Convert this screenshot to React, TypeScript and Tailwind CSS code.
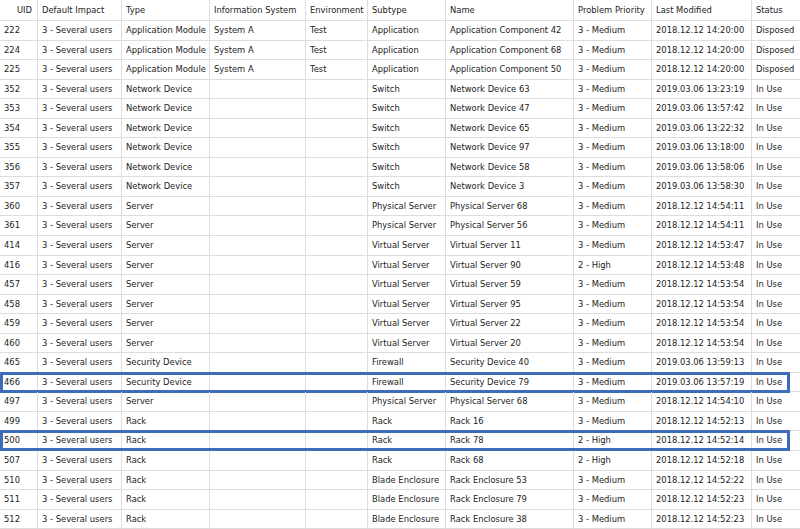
const cols = [38, 84, 88, 96, 62, 78, 128, 78, 100, 60];
const headers = ["UID","Default Impact","Type","Information System","Environment","Subtype","Name","Problem Priority","Last Modified","Status"];
const raw: string[] = [
"222|AM|System A|Test|Application|Application Component 42|3 - Medium|2018.12.12 14:20:00|Disposed",
"224|AM|System A|Test|Application|Application Component 68|3 - Medium|2018.12.12 14:20:00|Disposed",
"225|AM|System A|Test|Application|Application Component 50|3 - Medium|2018.12.12 14:20:00|Disposed",
"352|ND|||Switch|Network Device 63|3 - Medium|2019.03.06 13:23:19|In Use",
"353|ND|||Switch|Network Device 47|3 - Medium|2019.03.06 13:57:42|In Use",
"354|ND|||Switch|Network Device 65|3 - Medium|2019.03.06 13:22:32|In Use",
"355|ND|||Switch|Network Device 97|3 - Medium|2019.03.06 13:18:00|In Use",
"356|ND|||Switch|Network Device 58|3 - Medium|2019.03.06 13:58:06|In Use",
"357|ND|||Switch|Network Device 3|3 - Medium|2019.03.06 13:58:30|In Use",
"360|Server|||Physical Server|Physical Server 68|3 - Medium|2018.12.12 14:54:11|In Use",
"361|Server|||Physical Server|Physical Server 56|3 - Medium|2018.12.12 14:54:11|In Use",
"414|Server|||Virtual Server|Virtual Server 11|3 - Medium|2018.12.12 14:53:47|In Use",
"416|Server|||Virtual Server|Virtual Server 90|2 - High|2018.12.12 14:53:48|In Use",
"457|Server|||Virtual Server|Virtual Server 59|3 - Medium|2018.12.12 14:53:54|In Use",
"458|Server|||Virtual Server|Virtual Server 95|3 - Medium|2018.12.12 14:53:54|In Use",
"459|Server|||Virtual Server|Virtual Server 22|3 - Medium|2018.12.12 14:53:54|In Use",
"460|Server|||Virtual Server|Virtual Server 20|3 - Medium|2018.12.12 14:53:54|In Use",
"465|Security Device|||Firewall|Security Device 40|3 - Medium|2019.03.06 13:59:13|In Use",
"466|Security Device|||Firewall|Security Device 79|3 - Medium|2019.03.06 13:57:19|In Use",
"497|Server|||Physical Server|Physical Server 68|3 - Medium|2018.12.12 14:54:10|In Use",
"499|Rack|||Rack|Rack 16|3 - Medium|2018.12.12 14:52:13|In Use",
"500|Rack|||Rack|Rack 78|2 - High|2018.12.12 14:52:14|In Use",
"507|Rack|||Rack|Rack 68|2 - High|2018.12.12 14:52:18|In Use",
"510|Rack|||Blade Enclosure|Rack Enclosure 53|3 - Medium|2018.12.12 14:52:22|In Use",
"511|Rack|||Blade Enclosure|Rack Enclosure 79|3 - Medium|2018.12.12 14:52:23|In Use",
"512|Rack|||Blade Enclosure|Rack Enclosure 38|3 - Medium|2018.12.12 14:52:23|In Use",
];
const rows = raw.map((r) => {
  const p = r.split("|");
  const t = p[1] === "AM" ? "Application Module" : p[1] === "ND" ? "Network Device" : p[1];
  return [p[0], "3 - Several users", t, ...p.slice(2)];
});
const hl = new Set(["466", "500"]);

export default function App() {
  return (
    <div className="w-[800px] h-[529px] overflow-hidden bg-white text-[#222] text-[8.4px]" style={{ fontFamily: '"DejaVu Sans", Verdana, sans-serif' }}>
      <div className="flex h-[21px] border-b border-[#ddd]">
        {headers.map((h, i) => (
          <div key={i} className={`shrink-0 flex items-center px-[4px] border-r border-[#ddd] whitespace-nowrap overflow-hidden ${i === 0 ? "justify-end pr-[5px]" : ""}`} style={{ width: cols[i] }}>{h}</div>
        ))}
      </div>
      {rows.map((r, ri) => (
        <div key={ri} className="relative flex h-[19.56px] border-b border-[#ddd]">
          {r.map((c, i) => (
            <div key={i} className="shrink-0 flex items-center px-[4px] border-r border-[#ddd] whitespace-nowrap overflow-hidden" style={{ width: cols[i] }}>{c}</div>
          ))}
          {hl.has(r[0]) && <div className="absolute left-0 top-[-1px] w-[790px] h-[21px] border-[3px] border-[#3d6cb9]" />}
        </div>
      ))}
    </div>
  );
}
